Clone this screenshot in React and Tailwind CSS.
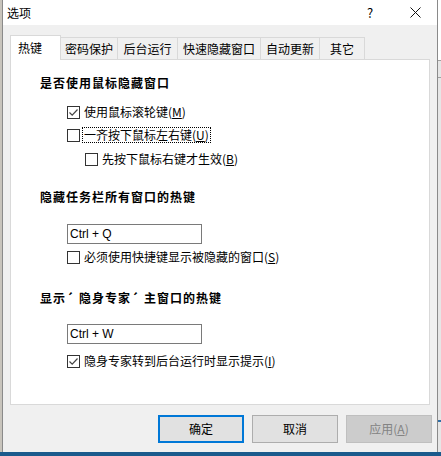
import React from 'react';

const font = { fontFamily: '"Noto Sans CJK SC", "Microsoft YaHei", sans-serif' };

const Box = ({ checked }) => (
  <span className="w-[13px] h-[13px] border border-[#333333] bg-white flex items-center justify-center shrink-0">
    {checked && (
      <svg width="11" height="11" viewBox="0 0 11 11">
        <path d="M1.5 5.5 L4.2 8.2 L9.5 2.5" fill="none" stroke="#444444" strokeWidth="1.2" />
      </svg>
    )}
  </span>
);

const Check = ({ checked, label, keyChar, focus, className = '' }) => (
  <div className={`flex items-center h-[16px] ${className}`}>
    <Box checked={checked} />
    <span className={`ml-[2px] px-[1px] leading-[14px] border ${focus ? 'border-dotted border-black' : 'border-transparent'}`}>
      {label}(<span className="underline">{keyChar}</span>)
    </span>
  </div>
);

const tabs = [
  { name: '密码保护', w: 'w-[58px]' },
  { name: '后台运行', w: 'w-[61px]' },
  { name: '快速隐藏窗口', w: 'w-[84px]' },
  { name: '自动更新', w: 'w-[60px]' },
  { name: '其它', w: 'w-[46px]' },
];

export default function App() {
  return (
    <div className="w-[441px] h-[456px] flex flex-col overflow-hidden bg-[#d0d0d0] text-[12px] text-black" style={font}>
      <div className="flex h-[452px]">
        <div className="w-[2px] bg-[#c8c4bc]" />

        {/* dialog window */}
        <div className="w-[436px] flex flex-col border-x border-[#8a8a8a] bg-[#f0f0f0]">
          <div className="h-[25px] bg-white flex items-center pl-[4px]">
            <span>选项</span>
            <span className="ml-auto w-[10px] text-center text-[13px]">?</span>
            <svg className="ml-[35px] mr-[16px]" width="11" height="11" viewBox="0 0 11 11">
              <path d="M0.5 0.5 L10.5 10.5 M10.5 0.5 L0.5 10.5" stroke="#111111" strokeWidth="1" />
            </svg>
          </div>

          <div className="flex-1 flex flex-col pt-[10px] pl-[7px] pr-[5px]">
            {/* tabs */}
            <div className="flex items-end h-[25px]">
              <div className="relative z-10 w-[51px] h-[25px] bg-white border border-b-0 border-[#d9d9d9] flex items-center pl-[7px] pb-[1px]">
                热键
              </div>
              {tabs.map((t) => (
                <div
                  key={t.name}
                  className={`${t.w} h-[23px] -ml-px bg-[#f0f0f0] border border-b-0 border-[#d9d9d9] flex items-center justify-center pb-[1px]`}
                >
                  {t.name}
                </div>
              ))}
            </div>

            {/* panel */}
            <div className="-mt-px mr-[2px] h-[346px] bg-white border border-[#d9d9d9] flex flex-col pl-[29px]">
              <div className="mt-[15px] h-[16px] leading-[16px] font-bold tracking-[1px]">是否使用鼠标隐藏窗口</div>
              <Check className="mt-[13px] ml-[27px]" checked label="使用鼠标滚轮键" keyChar="M" />
              <Check className="mt-[7px] ml-[27px]" focus label="一齐按下鼠标左右键" keyChar="U" />
              <Check className="mt-[8px] ml-[45px]" label="先按下鼠标右键才生效" keyChar="B" />

              <div className="mt-[22px] h-[16px] leading-[16px] font-bold tracking-[1px]">隐藏任务栏所有窗口的热键</div>
              <div
                className="mt-[19px] ml-[27px] w-[135px] h-[20px] border border-[#7a7a7a] bg-white flex items-center pl-[2px] text-[12px]"
                style={{ fontFamily: '"Liberation Sans", Arial, sans-serif' }}
              >
                Ctrl + Q
              </div>
              <Check className="mt-[5px] ml-[27px]" label="必须使用快捷键显示被隐藏的窗口" keyChar="S" />

              <div className="mt-[25px] h-[16px] leading-[16px] font-bold tracking-[1px] flex">
                <span>显示</span>
                <span className="inline-block w-[13px]">´</span>
                <span>隐身专家</span>
                <span className="inline-block w-[13px]">´</span>
                <span>主窗口的热键</span>
              </div>
              <div
                className="mt-[18px] ml-[27px] w-[135px] h-[20px] border border-[#7a7a7a] bg-white flex items-center pl-[2px] text-[12px]"
                style={{ fontFamily: '"Liberation Sans", Arial, sans-serif' }}
              >
                Ctrl + W
              </div>
              <Check className="mt-[9px] ml-[27px]" checked label="隐身专家转到后台运行时显示提示" keyChar="I" />
            </div>

            {/* buttons */}
            <div className="mt-[10px] flex justify-end gap-[8px]">
              <button className="w-[86px] h-[28px] bg-[#e1e1e1] border-2 border-[#0078d7] text-black">确定</button>
              <button className="w-[86px] h-[28px] bg-[#e1e1e1] border border-[#adadad] text-black">取消</button>
              <button className="w-[86px] h-[28px] bg-[#cccccc] border border-[#bfbfbf] text-[#838383]">
                应用(<span className="underline">A</span>)
              </button>
            </div>
          </div>
        </div>

        {/* background app sliver */}
        <div className="flex-1 bg-[#e6e6e6] flex flex-col">
          <div className="h-[60px] bg-white" />
          <div className="h-px bg-[#a0a0a0]" />
          <div className="h-[16px]" />
          <div className="h-px bg-[#a0a0a0]" />
          <div className="flex-1" />
          <div className="h-[2px] bg-[#2f6fa8] mb-[30px]" />
        </div>
      </div>
      <div className="h-[4px] bg-[#1b5a8c]" />
    </div>
  );
}
